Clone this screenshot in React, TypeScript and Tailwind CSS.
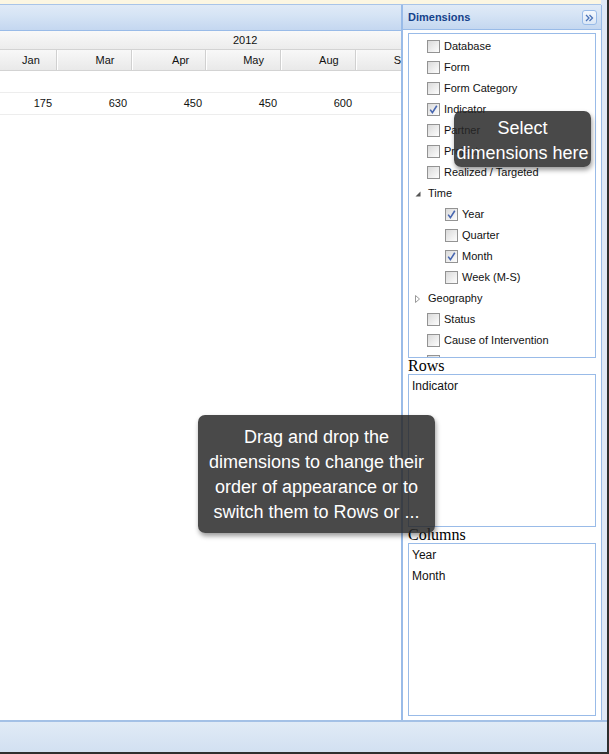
import React from "react";

const font = { fontFamily: '"Liberation Sans", Arial, sans-serif' };

function Check({ checked }: { checked?: boolean }) {
  return (
    <svg width="13" height="13" viewBox="0 0 13 13" className="shrink-0">
      <defs>
        <linearGradient id="cbg" x1="0" y1="0" x2="1" y2="1">
          <stop offset="0" stopColor="#d8d8d8" />
          <stop offset="1" stopColor="#ffffff" />
        </linearGradient>
      </defs>
      <rect x="0.5" y="0.5" width="12" height="12" fill="url(#cbg)" stroke="#939393" />
      {checked && (
        <path d="M3.2 6.6 L5.4 9.6 L9.8 2.8" fill="none" stroke="#4766b0" strokeWidth="1.6" />
      )}
    </svg>
  );
}

function Item({ label, checked, indent }: { label?: string; checked?: boolean; indent?: boolean }) {
  return (
    <div className={`flex h-[21px] items-center ${indent ? "pl-[36px]" : "pl-[18px]"}`}>
      <Check checked={checked} />
      {label && <span className="ml-[4px] text-[11px] text-[#111]">{label}</span>}
    </div>
  );
}

function Folder({ label, open }: { label: string; open?: boolean }) {
  return (
    <div className="flex h-[21px] items-center pl-[5px]">
      <svg width="8" height="8" viewBox="0 0 8 8" className="shrink-0">
        {open ? (
          <path d="M6.5 1.5 L6.5 6.5 L1.5 6.5 Z" fill="#555" />
        ) : (
          <path d="M1.5 0.5 L5.5 4 L1.5 7.5 Z" fill="none" stroke="#999" strokeWidth="1" />
        )}
      </svg>
      <span className="ml-[6px] text-[11px] text-[#111]">{label}</span>
    </div>
  );
}

export default function App() {
  const months = ["Mar", "Apr", "May", "Aug"];
  const values = ["630", "450", "450", "600"];
  return (
    <div className="relative h-[754px] w-[609px] overflow-hidden bg-[#2e2e2e]" style={font}>
      <div className="flex h-[752px] w-[607px] flex-col bg-[#dfe8f6]">
        {/* top strip */}
        <div className="flex h-[5px] shrink-0">
          <div className="h-[4px] w-[601px] border-b border-[#a9c4e8] bg-[#fcf6e2] box-content" />
          <div className="flex-1 bg-[#dfe8f6]" />
        </div>
        {/* main */}
        <div className="flex min-h-0 flex-1">
          {/* left panel */}
          <div className="flex w-[401px] shrink-0 flex-col bg-white">
            <div className="h-[26px] shrink-0 border-b border-[#99bbe8] bg-[linear-gradient(#e0eaf7_0%,#d6e4f5_40%,#c4d7f0_100%)]" />
            {/* 2012 row */}
            <div className="flex h-[19px] shrink-0 items-center border-b border-[#d3d3d3] bg-[linear-gradient(#f9f9f9,#ececec)] pl-[233px] text-[11px] text-[#111]">
              2012
            </div>
            {/* month row */}
            <div className="flex h-[21px] shrink-0 border-b border-[#d3d3d3] bg-[linear-gradient(#f8f8f8,#e9e9e9)] text-[11px] text-[#111]">
              <div className="flex w-[57px] items-center justify-end border-r border-[#d0d0d0] pr-[16px]">Jan</div>
              {months.map((m) => (
                <div
                  key={m}
                  className="flex w-[75px] items-center justify-end border-r border-[#d0d0d0] pr-[16px] shadow-[inset_1px_0_0_#fff]"
                >
                  {m}
                </div>
              ))}
              <div className="flex flex-1 items-center pl-[38px] shadow-[inset_1px_0_0_#fff]">S</div>
            </div>
            {/* empty row */}
            <div className="h-[22px] shrink-0 border-b border-[#ededed]" />
            {/* data row */}
            <div className="flex h-[22px] shrink-0 border-b border-[#ededed] text-[11px] text-[#111]">
              <div className="flex w-[57px] items-center justify-end pr-[5px]">175</div>
              {values.map((v, i) => (
                <div key={i} className="flex w-[75px] items-center justify-end pr-[5px]">
                  {v}
                </div>
              ))}
            </div>
            <div className="flex-1" />
          </div>
          {/* divider */}
          <div className="w-[2px] shrink-0 bg-[#99bbe8]" />
          {/* right panel */}
          <div className="flex w-[198px] shrink-0 flex-col bg-white">
            <div className="flex h-[25px] shrink-0 items-center justify-between border-b border-[#99bbe8] bg-[linear-gradient(#e0eaf7_0%,#d6e4f5_40%,#c4d7f0_100%)] pl-[5px] pr-[4px] pt-[1px]">
              <span className="text-[11px] font-bold text-[#15428b]">Dimensions</span>
              <div className="flex h-[15px] w-[15px] items-center justify-center rounded-[3px] border border-[#99bbe8] bg-[linear-gradient(#f4f8fd,#dbe7f6)]">
                <svg width="9" height="8" viewBox="0 0 9 8">
                  <path d="M1 1 L4 4 L1 7 M4.5 1 L7.5 4 L4.5 7" fill="none" stroke="#4a72b8" strokeWidth="1.3" />
                </svg>
              </div>
            </div>
            <div className="flex flex-1 flex-col px-[5px] pt-[3px]">
              {/* tree box */}
              <div className="h-[325px] shrink-0 overflow-hidden border border-[#99bbe8] pt-[2px]">
                <Item label="Database" />
                <Item label="Form" />
                <Item label="Form Category" />
                <Item label="Indicator" checked />
                <Item label="Partner" />
                <Item label="Project" />
                <Item label="Realized / Targeted" />
                <Folder label="Time" open />
                <Item label="Year" checked indent />
                <Item label="Quarter" indent />
                <Item label="Month" checked indent />
                <Item label="Week (M-S)" indent />
                <Folder label="Geography" />
                <Item label="Status" />
                <Item label="Cause of Intervention" />
                <Item />
              </div>
              <div
                className="h-[16px] shrink-0 text-[16px] leading-[15px] text-black"
                style={{ fontFamily: '"Liberation Serif", "Times New Roman", serif' }}
              >
                Rows
              </div>
              <div className="h-[153px] shrink-0 border border-[#99bbe8] px-[3px] pt-[1px] text-[12px] leading-[21px] text-[#111]">
                Indicator
              </div>
              <div
                className="h-[16px] shrink-0 text-[16px] leading-[15px] text-black"
                style={{ fontFamily: '"Liberation Serif", "Times New Roman", serif' }}
              >
                Columns
              </div>
              <div className="h-[173px] shrink-0 border border-[#99bbe8] px-[3px] pt-[1px] text-[12px] leading-[21px] text-[#111]">
                <div>Year</div>
                <div>Month</div>
              </div>
            </div>
          </div>
          <div className="w-[1px] shrink-0 bg-[#99bbe8]" />
          <div className="flex-1 bg-[#dfe8f6]" />
        </div>
        {/* bottom blue line + footer */}
        <div className="h-[2px] shrink-0 bg-[#a4c1e6]" />
        <div className="h-[30px] shrink-0 bg-[linear-gradient(#e1ebf6,#d2e0f1)]" />
      </div>

      {/* Tooltips */}
      <div className="absolute left-[454px] top-[111px] flex h-[56px] w-[137px] flex-col items-center justify-center rounded-[7px] bg-[rgba(38,38,38,0.84)] pt-[4px] text-[18px] leading-[25px] text-white shadow-[1px_3px_5px_rgba(0,0,0,0.4)]">
        <span>Select</span>
        <span className="whitespace-nowrap">dimensions here</span>
      </div>
      <div className="absolute left-[198px] top-[415px] flex h-[118px] w-[237px] flex-col items-center justify-center rounded-[7px] bg-[rgba(38,38,38,0.84)] pt-[1px] text-[18px] leading-[25px] text-white shadow-[1px_3px_5px_rgba(0,0,0,0.4)]">
        <span>Drag and drop the</span>
        <span className="whitespace-nowrap">dimensions to change their</span>
        <span className="whitespace-nowrap">order of appearance or to</span>
        <span className="whitespace-nowrap">switch them to Rows or ...</span>
      </div>
    </div>
  );
}
